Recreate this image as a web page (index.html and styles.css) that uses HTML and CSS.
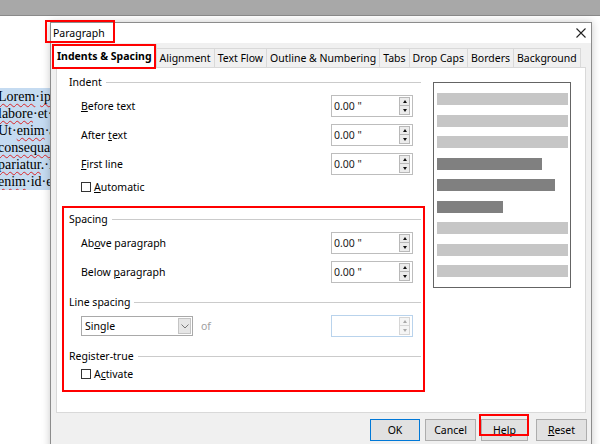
FILE: index.html
```html
<!DOCTYPE html>
<html lang="en">
<head>
    <meta charset="UTF-8">
    <title>Paragraph</title>
    <link rel="stylesheet" href="styles.css">
</head>
<body class="body">
    <div class="chrome"></div>
    <div class="doc">
        <p class="sel">
            <span class="ln"><span class="sp">Lorem</span>·<span class="sp">ipsum</span>·dolor·sit·amet</span>
            <span class="ln"><span class="sp">labore</span>·et·<span class="sp">dolore</span>·magna</span>
            <span class="ln">Ut·<span class="sp">enim</span>·ad·<span class="sp">minim</span></span>
            <span class="ln"><span class="sp">consequat</span>.·Duis·aute</span>
            <span class="ln"><span class="sp">pariatur</span>.·Excepteur</span>
            <span class="ln"><span class="sp">enim</span>·id·est·<span class="sp">laborum</span>.</span>
        </p>
    </div>

    <div class="dialog">
        <div class="titlebar">
            <span class="title mark">Paragraph</span>
            <svg class="close" width="10" height="10" viewBox="0 0 10 10">
                <path d="M0.5 0.5 L9.5 9.5 M9.5 0.5 L0.5 9.5" stroke="#222" stroke-width="1.1" fill="none"/>
            </svg>
        </div>

        <div class="tabs">
            <div class="tab active mark">Indents &amp; Spacing</div>
            <div class="tab">Alignment</div>
            <div class="tab">Text Flow</div>
            <div class="tab">Outline &amp; Numbering</div>
            <div class="tab">Tabs</div>
            <div class="tab">Drop Caps</div>
            <div class="tab">Borders</div>
            <div class="tab">Background</div>
        </div>

        <div class="panel">
            <div class="form">
                <div class="indent">
                    <div class="legend">Indent</div>
                    <div class="row first">
                        <span><u>B</u>efore text</span>
                        <div class="spin"><span>0.00 "</span><span class="arrows"><i class="up"></i><i class="down"></i></span></div>
                    </div>
                    <div class="row">
                        <span>After <u>t</u>ext</span>
                        <div class="spin"><span>0.00 "</span><span class="arrows"><i class="up"></i><i class="down"></i></span></div>
                    </div>
                    <div class="row">
                        <span><u>F</u>irst line</span>
                        <div class="spin"><span>0.00 "</span><span class="arrows"><i class="up"></i><i class="down"></i></span></div>
                    </div>
                    <div class="check"><span class="box"></span><span><u>A</u>utomatic</span></div>
                </div>

                <div class="marked">
                    <div class="legend">Spacing</div>
                    <div class="row first">
                        <span>Ab<u>o</u>ve paragraph</span>
                        <div class="spin"><span>0.00 "</span><span class="arrows"><i class="up"></i><i class="down"></i></span></div>
                    </div>
                    <div class="row">
                        <span>Below <u>p</u>aragraph</span>
                        <div class="spin"><span>0.00 "</span><span class="arrows"><i class="up"></i><i class="down"></i></span></div>
                    </div>

                    <div class="legend spaced">Line spacing</div>
                    <div class="row first">
                        <div class="select">
                            <span>Single</span>
                            <span class="caret">
                                <svg width="8" height="5" viewBox="0 0 8 5"><path d="M0.5 0.5 L4 4 L7.5 0.5" stroke="#777" stroke-width="1" fill="none"/></svg>
                            </span>
                        </div>
                        <span class="of">of</span>
                        <div class="spin off"><span></span><span class="arrows"><i class="up"></i><i class="down"></i></span></div>
                    </div>

                    <div class="legend spaced">Register-true</div>
                    <div class="check tight"><span class="box"></span><span>A<u>c</u>tivate</span></div>
                </div>
            </div>

            <div class="preview">
                <div class="bar"></div>
                <div class="bar"></div>
                <div class="bar"></div>
                <div class="bar dark" style="width: 105px"></div>
                <div class="bar dark" style="width: 118px"></div>
                <div class="bar dark" style="width: 66px"></div>
                <div class="bar"></div>
                <div class="bar"></div>
                <div class="bar"></div>
            </div>
        </div>

        <div class="buttons">
            <button class="btn ok">OK</button>
            <button class="btn">Cancel</button>
            <button class="btn help mark"><u>H</u>elp</button>
            <button class="btn"><u>R</u>eset</button>
        </div>
    </div>
</body>
</html>
```

FILE: styles.css
```css
* {
    box-sizing: border-box;
}

.body {
    position: relative;
    width: 600px;
    height: 444px;
    margin: 0;
    overflow: hidden;
    background-color: #fff;
    font-family: "Noto Sans", "Open Sans", sans-serif;
    font-size: 10.5px;
    color: #000;
}

.chrome {
    height: 16px;
    background-color: #a8a8a8;
    border-bottom: 1px solid #8a8a8a;
}

.doc {
    padding-top: 72px;
}

.sel {
    width: 220px;
    margin: 0;
    background-color: #c5dbf1;
    font-family: "Liberation Serif", serif;
    font-size: 14px;
    line-height: 17px;
    white-space: nowrap;
    overflow: hidden;
}

.ln {
    display: block;
    margin-left: -2px;
}

.sp {
    text-decoration: underline wavy #d9262a;
    text-decoration-thickness: 1px;
    text-decoration-skip-ink: none;
    text-underline-offset: 2px;
}

/* red annotation boxes drawn over the controls */
.mark {
    position: relative;
}

.mark::after {
    content: "";
    position: absolute;
    border: 2px solid #f00;
    pointer-events: none;
}

.dialog {
    position: absolute;
    left: 50px;
    top: 22px;
    width: 542px;
    height: 440px;
    background-color: #f0f0f0;
    border: 1px solid #8c8c8c;
    box-shadow: 0 0 8px rgba(0, 0, 0, 0.22);
}

.titlebar {
    display: flex;
    align-items: center;
    justify-content: space-between;
    height: 20px;
    padding: 0 5px 0 2px;
    background-color: #fff;
}

.title {
    display: block;
    line-height: 20px;
    font-size: 10.5px;
}

.title::after {
    top: -3px;
    bottom: 0;
    left: -8px;
    right: -10px;
}

.tabs {
    position: relative;
    z-index: 1;
    display: flex;
    align-items: flex-end;
    height: 25px;
    margin-bottom: -1px;
    padding-left: 1px;
}

.tab {
    height: 20px;
    padding: 0 3px;
    line-height: 18px;
    background-color: #f0f0f0;
    border: 1px solid #d9d9d9;
    border-left: none;
    white-space: nowrap;
}

.tab.active {
    height: 24px;
    padding: 2px 4px 0;
    font-weight: bold;
    background-color: #fff;
    border-left: 1px solid #d9d9d9;
    border-bottom: none;
}

.tab.active::after {
    top: -1px;
    left: -1px;
    right: 0;
    bottom: -1px;
}

.panel {
    display: flex;
    align-items: flex-start;
    height: 346px;
    margin: 0 5px;
    background-color: #fff;
    border: 1px solid #d9d9d9;
}

.form {
    width: 363px;
    margin-left: 5px;
}

.indent {
    padding: 6px 4px 11px 7px;
}

.marked {
    border: 2px solid #f00;
    padding: 3px 2px 8px 5px;
}

.legend {
    display: flex;
    align-items: center;
    gap: 4px;
    line-height: 16px;
}

.legend::after {
    content: "";
    flex: 1;
    border-top: 1px solid #cbcbcb;
}

.legend.spaced {
    margin-top: 11px;
}

.row {
    display: flex;
    align-items: center;
    justify-content: space-between;
    height: 22px;
    margin-top: 7px;
    padding: 0 8px 0 12px;
}

.row.first {
    margin-top: 5px;
}

.spin {
    display: flex;
    align-items: center;
    justify-content: space-between;
    width: 82px;
    height: 22px;
    padding: 0 2px 0 2px;
    background-color: #fff;
    border: 1px solid #bdbdbd;
    color: #222;
}

.spin.off {
    margin-left: auto;
    border-color: #b9d3ec;
}

.arrows {
    display: flex;
    flex-direction: column;
}

.arrows i {
    display: flex;
    align-items: center;
    justify-content: center;
    width: 11px;
    height: 9px;
    background-color: #ececec;
    border: 1px solid #b8b8b8;
}

.arrows i.down {
    border-top: none;
    height: 9px;
}

.arrows i::before {
    content: "";
    border-left: 2.5px solid transparent;
    border-right: 2.5px solid transparent;
}

.arrows .up::before {
    border-bottom: 3px solid #111;
}

.arrows .down::before {
    border-top: 3px solid #111;
}

.spin.off .arrows i {
    background-color: #f5f5f5;
    border-color: #d6d6d6;
}

.spin.off .arrows .up::before {
    border-bottom-color: #a8a8a8;
}

.spin.off .arrows .down::before {
    border-top-color: #a8a8a8;
}

.select {
    display: flex;
    align-items: center;
    justify-content: space-between;
    width: 112px;
    height: 20px;
    padding: 0 1px 0 3px;
    border: 1px solid #a9a9a9;
    background-color: #fff;
}

.caret {
    display: flex;
    align-items: center;
    justify-content: center;
    width: 13px;
    height: 16px;
    background-color: #e6e6e6;
    border: 1px solid #c4c4c4;
}

.of {
    margin-left: 8px;
    color: #a0a0a0;
}

.check {
    display: flex;
    align-items: center;
    gap: 3px;
    height: 16px;
    margin-top: 4px;
    padding-left: 12px;
}

.check.tight {
    margin-top: 2px;
}

.box {
    width: 10px;
    height: 10px;
    border: 1px solid #333;
    background-color: #fff;
}

.preview {
    display: flex;
    flex-direction: column;
    gap: 9.5px;
    width: 138px;
    height: 206px;
    margin: 14px 0 0 8px;
    padding: 10px 2px 0 3px;
    border: 1px solid #646464;
}

.bar {
    height: 12px;
    background-color: #c6c6c6;
}

.bar.dark {
    background-color: #808080;
}

.buttons {
    display: flex;
    justify-content: flex-end;
    gap: 5px;
    padding: 6px 4px 0 0;
}

.btn {
    width: 51px;
    height: 22px;
    padding: 0;
    font-family: inherit;
    font-size: 10.5px;
    color: #000;
    background-color: #e1e1e1;
    border: 1px solid #adadad;
}

.btn.ok {
    width: 50px;
    border-color: #0078d7;
}

.btn.help {
    width: 47px;
    margin-right: 3px;
}

.help::after {
    top: -6px;
    bottom: 4px;
    left: -3px;
    right: -2px;
}
```
